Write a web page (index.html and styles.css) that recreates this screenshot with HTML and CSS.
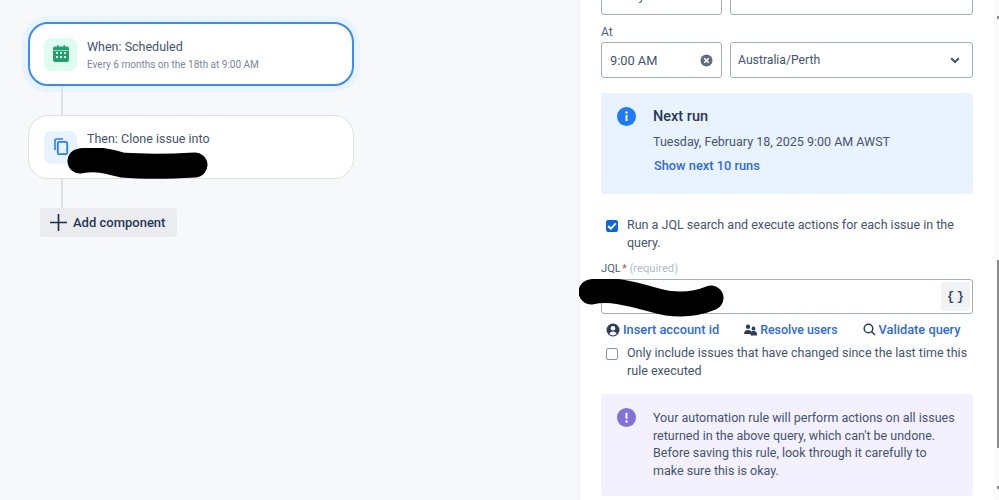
FILE: index.html
```html
<!DOCTYPE html>
<html lang="en">
<head>
<meta charset="utf-8">
<title>Automation rule</title>
<link rel="stylesheet" href="styles.css">
</head>
<body>
<main class="canvas">
  <article class="node node-active">
    <span class="tile tile-green">
      <svg width="20" height="20" viewBox="0 0 20 20"><path fill="#22a06b" d="M4 2.500h2V1.200h1.600v1.300h4.800V1.200H14v1.300h2a2 2 0 0 1 2 2V16a2 2 0 0 1-2 2H4a2 2 0 0 1-2-2V4.500a2 2 0 0 1 2-2z"/><path fill="#dffcf0" d="M5 8h2v2H5zM9 8h2v2H9zM13 8h2v2h-2zM5 12h2v2H5zM9 12h2v2H9zM13 12h2v2h-2z"/><path fill="#dffcf0" d="M2 6h16v.6H2z"/></svg>
    </span>
    <div class="node-text">
      <div class="node-title">When: Scheduled</div>
      <div class="node-sub">Every 6 months on the 18th at 9:00 AM</div>
    </div>
  </article>
  <div class="link"></div>
  <article class="node">
    <span class="tile tile-blue">
      <svg width="16" height="18" viewBox="0 0 16 18"><path fill="none" stroke="#2b7bff" stroke-width="1.600" d="M2 12V2.500A1.500 1.500 0 0 1 3.500 1H10"/><rect x="4.800" y="3.800" width="9.400" height="12.400" rx="1.500" fill="none" stroke="#2b7bff" stroke-width="1.800"/></svg>
    </span>
    <div class="node-text">
      <div class="node-title">Then: Clone issue into</div>
    </div>
  </article>
  <div class="link"></div>
  <button class="add-btn" type="button">
    <svg width="17" height="17" viewBox="0 0 17 17"><path fill="#172b4d" d="M7.700 0h1.600v7.700H17v1.600H9.300V17H7.700V9.300H0V7.700h7.700z"/></svg>
    Add component
  </button>
  <svg class="redact redact-a" width="142" height="32" viewBox="0 0 142 32"><path d="M13 13 C30 10 40 13 55 17 C80 19 110 18 128 17" fill="none" stroke="#000" stroke-width="25" stroke-linecap="round"/></svg>
</main>

<aside class="panel">
  <div class="field-row field-row-cut">
    <div class="input input-left input-time"><span>Friday</span></div>
    <div class="input input-right input-select"><span>18th</span></div>
  </div>
  <div class="label">At</div>
  <div class="field-row">
    <div class="input input-left input-time">
      <span>9:00 AM</span>
      <svg width="13" height="13" viewBox="0 0 13 13"><circle cx="6.500" cy="6.500" r="6" fill="#5e6c84"/><path d="M4.300 4.300l4.400 4.400M8.700 4.300l-4.400 4.400" stroke="#fff" stroke-width="1.600"/></svg>
    </div>
    <div class="input input-right input-select">
      <span>Australia/Perth</span>
      <svg width="10" height="7" viewBox="0 0 10 7"><path d="M1.200 1.200L5 5l3.800-3.800" fill="none" stroke="#44546f" stroke-width="2"/></svg>
    </div>
  </div>

  <section class="notice notice-info">
    <svg class="notice-icon" width="19" height="19" viewBox="0 0 19 19"><circle cx="9.500" cy="9.500" r="9.500" fill="#1d7afc"/><rect x="8.500" y="8" width="2" height="6" fill="#fff"/><circle cx="9.500" cy="5.500" r="1.200" fill="#fff"/></svg>
    <div class="notice-body">
      <h2 class="notice-title">Next run</h2>
      <p class="notice-line">Tuesday, February 18, 2025 9:00 AM AWST</p>
      <a class="link-btn show-next">Show next 10 runs</a>
    </div>
  </section>

  <label class="check check-first">
    <span class="box box-on"><svg width="10" height="8" viewBox="0 0 10 8"><path d="M1.200 4l2.600 2.600L8.800 1.300" fill="none" stroke="#fff" stroke-width="1.800"/></svg></span>
    <span>Run a JQL search and execute actions for each issue in the query.</span>
  </label>

  <div class="jql-label">JQL<span class="star">*</span> <span class="req">(required)</span></div>
  <div class="jql-input"><span class="braces">{&#8201;}</span></div>

  <div class="actions">
    <a class="link-btn"><svg width="14" height="14" viewBox="0 0 14 14"><circle cx="7" cy="7" r="6.500" fill="#2c3e5d"/><circle cx="7" cy="5.300" r="2.300" fill="#fff"/><path d="M3.300 11c.6-1.700 2-2.500 3.700-2.500s3.100.8 3.700 2.500a5.500 5.500 0 0 1-7.400 0z" fill="#fff"/></svg>Insert account id</a>
    <a class="link-btn link-btn-tight"><svg width="13" height="12" viewBox="0 0 13 12"><circle cx="4" cy="2.800" r="2.200" fill="#2c3e5d"/><circle cx="9.500" cy="4.500" r="1.900" fill="#2c3e5d"/><path d="M0 10c0-2.600 1.600-4 4-4s3.600 1.200 3.800 3v1z" fill="#2c3e5d"/><path d="M6.500 11.500V10c0-2 1.300-3.300 3-3.300S13 8 13 10v1.500z" fill="#2c3e5d"/></svg>Resolve users</a>
    <a class="link-btn"><svg width="13" height="13" viewBox="0 0 13 13"><circle cx="5.500" cy="5.500" r="4.300" fill="none" stroke="#2c3e5d" stroke-width="1.500"/><path d="M8.700 8.700L12 12" stroke="#2c3e5d" stroke-width="1.600"/></svg>Validate query</a>
  </div>

  <label class="check">
    <span class="box"></span>
    <span>Only include issues that have changed since the last time this rule executed</span>
  </label>

  <section class="notice notice-warn">
    <svg class="notice-icon" width="19" height="19" viewBox="0 0 19 19"><circle cx="9.500" cy="9.500" r="9.500" fill="#8270db"/><rect x="8.500" y="4.500" width="2" height="6.500" rx="1" fill="#fff"/><circle cx="9.500" cy="13.500" r="1.200" fill="#fff"/></svg>
    <p class="notice-body notice-para">Your automation rule will perform actions on all issues returned in the above query, which can't be undone. Before saving this rule, look through it carefully to make sure this is okay.</p>
  </section>

  <svg class="redact redact-b" width="146" height="40" viewBox="0 0 146 40"><path d="M12 13 C30 9 50 14 75 21 C95 27 115 26 132 19" fill="none" stroke="#000" stroke-width="25" stroke-linecap="round"/></svg>
  <div class="scrolltrack">
    <div class="scrollarrow scrollarrow-up"></div>
    <div class="scrollthumb"></div>
    <div class="scrollarrow scrollarrow-down"></div>
  </div>
</aside>
</body>
</html>
```

FILE: styles.css
```css
* { box-sizing: border-box; }
html, body { margin: 0; height: 500px; overflow: hidden; }
body {
  display: flex;
  background: #f7f8f9;
  font-family: Roboto, "Open Sans", sans-serif;
  color: #44546f;
  font-size: 12.500px;
}
.canvas {
  position: relative;
  width: 579px;
  padding: 22px 0 0 28px;
  flex: none;
}
.node {
  width: 326px;
  height: 64px;
  border: 1px solid #dfe1e6;
  border-radius: 20px;
  background: #fff;
  display: flex;
  align-items: center;
  padding: 0 15px;
  gap: 10px;
}
.node-active {
  border: 2px solid #388bff;
  padding: 0 14px;
  box-shadow: 0 0 0 6px #e9f2ff;
}
.tile {
  width: 33px;
  height: 33px;
  border-radius: 7px;
  display: flex;
  align-items: center;
  justify-content: center;
  flex: none;
}
.tile-green { background: #dffcf0; }
.tile-blue { background: #e9f2ff; }
.node-text { align-self: flex-start; padding-top: 14px; }
.node-title { font-size: 12.500px; line-height: 18px; color: #44546f; }
.node-sub { font-size: 10px; line-height: 14px; margin-top: 2px; color: #7a869a; }
.link { width: 2px; height: 29px; background: #dfe1e6; margin-left: 33px; }
.add-btn {
  display: flex;
  align-items: center;
  gap: 6px;
  width: 137px;
  height: 29px;
  margin: 0 0 0 12px;
  padding: 0 0 0 10px;
  border: 0;
  border-radius: 3px;
  background: #ebecf0;
  color: #253858;
  font: 500 13px Roboto, "Open Sans", sans-serif;
}
.redact { position: absolute; }
.redact-a { left: 67px; top: 148px; }
.redact-b { left: -1px; top: 279px; }
.panel {
  position: relative;
  flex: 1;
  background: #fff;
  border-left: 1px solid #eceef1;
  padding-left: 21px;
  padding-right: 26px;
}
.field-row { display: flex; gap: 8px; }
.field-row-cut { margin-top: -22px; }
.input {
  height: 36px;
  border: 1px solid #a5adba;
  border-radius: 3px;
  background: #fff;
  display: flex;
  align-items: center;
  justify-content: space-between;
  flex: none;
}
.field-row-cut .input { height: 37px; padding-bottom: 3px; }
.input-left { width: 121px; }
.input-right { width: 243px; }
.input-time { padding: 0 8px; font-size: 12.800px; color: #42526e; }
.input-select { padding: 0 12px 0 7px; font-size: 12.200px; }
.label { font-size: 12px; line-height: 14px; margin-top: 10px; margin-bottom: 3px; color: #505f79; }
.notice {
  display: flex;
  width: 372px;
  border-radius: 3px;
  padding: 14px 16px;
  gap: 17px;
}
.notice-icon { flex: none; }
.notice-info { background: #e9f2ff; height: 101px; margin-top: 15px; }
.notice-warn { background: #f3f0ff; height: 102px; margin-top: 14px; }
.notice-body { margin: 0; }
.notice-title { margin: 0; font-size: 14.500px; line-height: 19px; font-weight: 500; color: #253858; }
.notice-line { margin: 7px 0 0; font-size: 12.500px; line-height: 17px; }
.show-next { margin: 7px 0 0 1px; display: flex; font-size: 12.600px; }
.notice-para { font-size: 12.500px; line-height: 17.700px; padding-top: 1px; }
.link-btn { color: #2d6ae0; font-weight: 500; font-size: 12.800px; line-height: 17px; display: inline-flex; align-items: center; gap: 3px; }
.link-btn-tight { font-size: 12.400px; }
.check { display: flex; gap: 9px; line-height: 18px; padding-left: 5px; width: 372px; }
.check-first { margin-top: 22px; }
.box {
  flex: none;
  width: 12px;
  height: 12px;
  margin-top: 4px;
  border: 1px solid #8993a4;
  border-radius: 2px;
  display: flex;
  align-items: center;
  justify-content: center;
}
.box-on { background: #0c66e4; border-color: #0c66e4; }
.jql-label { font-size: 11.200px; line-height: 13px; margin-top: 10px; color: #505f79; }
.star { color: #a8574c; margin-left: 1px; }
.req { color: #b3bac5; }
.jql-input {
  width: 372px;
  height: 35px;
  margin-top: 4px;
  border: 1px solid #a5adba;
  border-radius: 3px;
  display: flex;
  justify-content: flex-end;
  align-items: center;
  padding-right: 2px;
}
.braces {
  width: 29px;
  height: 29px;
  background: #f1f2f4;
  border-radius: 3px;
  display: flex;
  align-items: center;
  justify-content: center;
  font: 700 12px "Liberation Mono", monospace;
  color: #344563;
}
.actions { display: flex; gap: 25px; padding: 7px 0 0 5px; width: 372px; margin-bottom: 6px; }
.scrolltrack {
  position: absolute;
  right: 0;
  top: 0;
  width: 5px;
  height: 500px;
  background: #fbfbfb;
}
.scrollthumb {
  position: absolute;
  right: 0;
  top: 260px;
  width: 2px;
  height: 188px;
  background: #8a8a8a;
}
.scrollarrow {
  position: absolute;
  right: 0;
  width: 2px;
  height: 3px;
  background: #8a8a8a;
}
.scrollarrow-up { top: 16px; }
.scrollarrow-down { top: 486px; }
```
